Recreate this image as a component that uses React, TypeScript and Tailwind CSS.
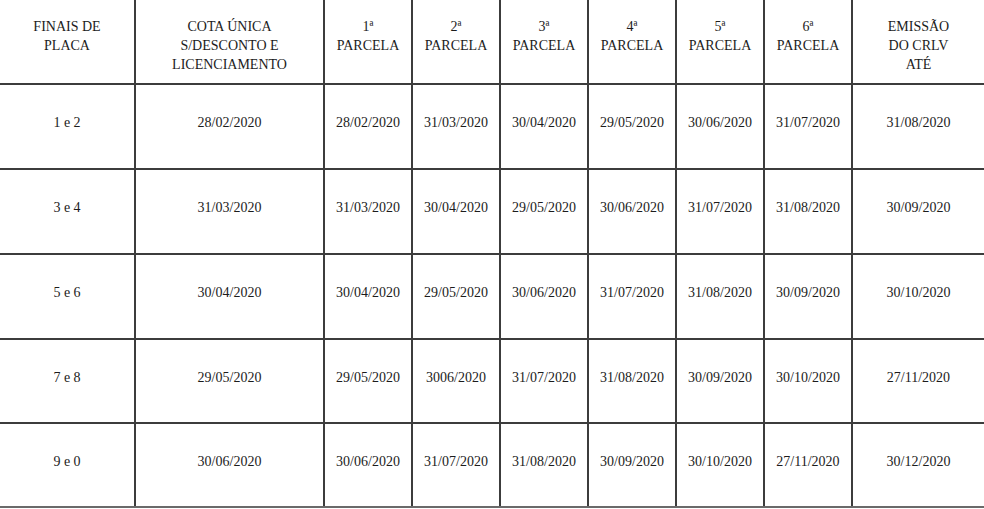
import React from 'react';

const headers = [
  ['FINAIS DE', 'PLACA'],
  ['COTA ÚNICA', 'S/DESCONTO E', 'LICENCIAMENTO'],
  ['1ª', 'PARCELA'],
  ['2ª', 'PARCELA'],
  ['3ª', 'PARCELA'],
  ['4ª', 'PARCELA'],
  ['5ª', 'PARCELA'],
  ['6ª', 'PARCELA'],
  ['EMISSÃO', 'DO CRLV', 'ATÉ'],
];

const rows = [
  ['1 e 2', '28/02/2020', '28/02/2020', '31/03/2020', '30/04/2020', '29/05/2020', '30/06/2020', '31/07/2020', '31/08/2020'],
  ['3 e 4', '31/03/2020', '31/03/2020', '30/04/2020', '29/05/2020', '30/06/2020', '31/07/2020', '31/08/2020', '30/09/2020'],
  ['5 e 6', '30/04/2020', '30/04/2020', '29/05/2020', '30/06/2020', '31/07/2020', '31/08/2020', '30/09/2020', '30/10/2020'],
  ['7 e 8', '29/05/2020', '29/05/2020', '3006/2020', '31/07/2020', '31/08/2020', '30/09/2020', '30/10/2020', '27/11/2020'],
  ['9 e 0', '30/06/2020', '30/06/2020', '31/07/2020', '31/08/2020', '30/09/2020', '30/10/2020', '27/11/2020', '30/12/2020'],
];

const cols = 'grid grid-cols-[136px_189px_88px_88px_88px_88px_88px_88px_1fr]';

export default function App() {
  return (
    <div className="w-[984px] h-[509px] bg-white text-[#1c1c1c] text-[14px] overflow-hidden font-['Liberation_Serif','Times_New_Roman',serif]">
      <div className={`${cols} h-[85px] border-b-2 border-[#3c3c3c]`}>
        {headers.map((lines, i) => (
          <div
            key={i}
            className={`flex flex-col items-center pt-[17px] leading-[19px] text-center ${i < 8 ? 'border-r-2 border-[#3c3c3c]' : ''}`}
          >
            {lines.map((l, j) => (
              <span key={j}>{l}</span>
            ))}
          </div>
        ))}
      </div>
      {rows.map((row, r) => (
        <div
          key={r}
          className={`${cols} ${r < 3 ? 'h-[85px]' : 'h-[84px]'} border-b-2 ${r === 4 ? 'border-[#6a6a6a]' : 'border-[#3c3c3c]'}`}
        >
          {row.map((cell, i) => (
            <div
              key={i}
              className={`flex items-center justify-center pb-[8px] ${i < 8 ? 'border-r-2 border-[#3c3c3c]' : ''}`}
            >
              {cell}
            </div>
          ))}
        </div>
      ))}
    </div>
  );
}
